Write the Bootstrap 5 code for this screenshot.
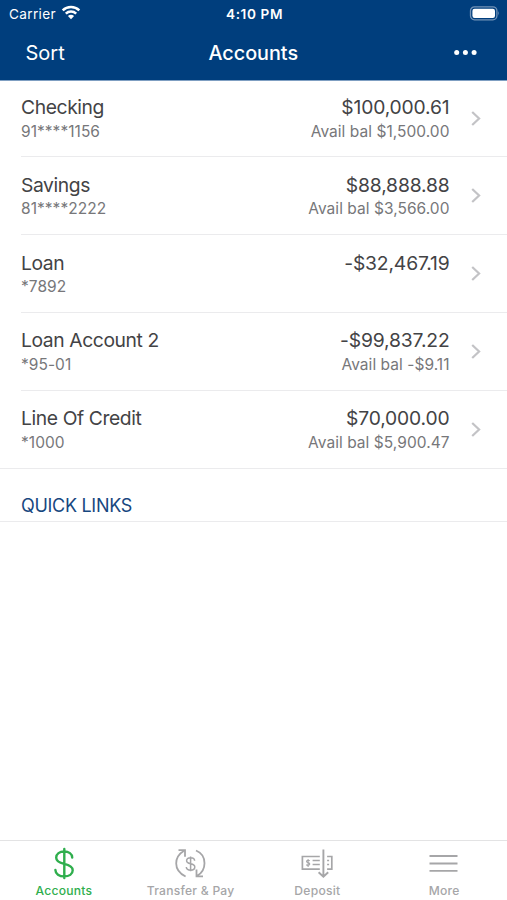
<!DOCTYPE html>
<html lang="en">
<head>
<meta charset="utf-8">
<meta name="viewport" content="width=device-width, initial-scale=1">
<title>Accounts</title>
<link href="https://cdn.jsdelivr.net/npm/bootstrap@5.3.0/dist/css/bootstrap.min.css" rel="stylesheet">
<style>
body{font-family:Inter,"Liberation Sans",sans-serif;color:#434345;height:900px;overflow:hidden}
svg{display:block;flex:none}
.topbar{background:#003e7d;height:81px;border-bottom:1px solid #7f9fc2}
.status{height:27px;font-size:13.6px;line-height:28px;padding:0 7px 0 9px}
.status .side,.titlebar .side{flex:1 1 0}
.status .side:first-child{letter-spacing:.35px}
.wifi{margin:-2px 0 0 5px}
.clock{font-weight:600;letter-spacing:.6px}
.titlebar{height:52px;padding:0 30px 0 25.5px;font-size:20px;line-height:50px}
.page-title{font-weight:500;font-size:19.8px;padding-left:4px}
.account{height:78px;padding:14px 26px 0 0;margin-left:21px;border-bottom:1px solid #ebebed}
.account:first-child{height:76px;padding-top:13px}
.account.last{margin-left:0;padding-left:21px}
.label,.amount{font-size:19.3px;line-height:27px}
.label{letter-spacing:-.4px}
.amount{letter-spacing:-.16px}
.number,.avail{font-size:15.5px;line-height:21px;color:#77777a;letter-spacing:.04px}
.values{margin-right:21.5px}
.account:nth-child(2) .label,.account:nth-child(2) .amount,.account:nth-child(3) .label,.account:nth-child(3) .amount{padding-top:1px;line-height:26px}
.chev{margin-top:15.5px}
.links-title{height:53px;padding:23px 0 0 21px;font-size:18px;line-height:27px;letter-spacing:-.3px;color:#17477f;border-bottom:1px solid #ebebed}
.tabs{height:60px;border-top:1px solid #e3e3e4;font-size:12.1px;font-weight:500;letter-spacing:.25px;color:#a6a6a8}
.tabs a{flex:1 1 0;color:inherit;padding:6px 0 0 1px;line-height:20px}
.tabs a.current{color:#2fae4d}
.tabs svg{height:34px}
</style>
<script src="https://cdn.jsdelivr.net/npm/bootstrap@5.3.0/dist/js/bootstrap.bundle.min.js"></script>
</head>
<body class="bg-white d-flex flex-column">
<header class="topbar text-white">
  <div class="status d-flex align-items-center">
    <div class="side d-flex align-items-center"><span>Carrier</span>
      <svg class="wifi" width="20" height="15" viewBox="0 0 20 15" fill="none" stroke="#fff" stroke-width="2.5"><path d="M1.700 5.400a12 12 0 0 1 16.600 0M4.800 8.600a7.600 7.600 0 0 1 10.400 0"/><path d="M10 14.200 6.900 11.100a4.500 4.500 0 0 1 6.200 0z" fill="#fff" stroke="none"/></svg>
    </div>
    <span class="clock">4:10 PM</span>
    <div class="side d-flex justify-content-end">
      <svg width="31" height="15" viewBox="0 0 31 15"><rect x="1.500" y=".8" width="26.400" height="13" rx="4" fill="none" stroke="#7393b7" stroke-width="1.300"/><rect x="3.400" y="2.700" width="22.600" height="9.200" rx="2.200" fill="#fff"/><path d="M29.200 5.100q1.700 2.200 0 4.500z" fill="#7393b7"/></svg>
    </div>
  </div>
  <nav class="titlebar d-flex align-items-center">
    <div class="side"><span>Sort</span></div>
    <span class="page-title">Accounts</span>
    <div class="side d-flex justify-content-end"><svg width="23" height="6" viewBox="0 0 23 6" fill="#fff"><circle cx="2.700" cy="2.500" r="2.500"/><circle cx="11.400" cy="2.500" r="2.500"/><circle cx="20.100" cy="2.500" r="2.500"/></svg></div>
  </nav>
</header>
<main class="flex-grow-1">
  <section>
    <div class="account d-flex"><div class="flex-grow-1"><div class="label">Checking</div><div class="number">91****1156</div></div><div class="values text-end"><div class="amount">$100,000.61</div><div class="avail">Avail bal $1,500.00</div></div><svg class="chev" width="10" height="17" viewBox="0 0 10 17" fill="none" stroke="#c3c3c6" stroke-width="2.200"><path d="m1.200 2 6.900 6.500-6.900 6.500"/></svg></div>
    <div class="account d-flex"><div class="flex-grow-1"><div class="label">Savings</div><div class="number">81****2222</div></div><div class="values text-end"><div class="amount">$88,888.88</div><div class="avail">Avail bal $3,566.00</div></div><svg class="chev" width="10" height="17" viewBox="0 0 10 17" fill="none" stroke="#c3c3c6" stroke-width="2.200"><path d="m1.200 2 6.900 6.500-6.900 6.500"/></svg></div>
    <div class="account d-flex"><div class="flex-grow-1"><div class="label">Loan</div><div class="number">*7892</div></div><div class="values text-end"><div class="amount">-$32,467.19</div></div><svg class="chev" width="10" height="17" viewBox="0 0 10 17" fill="none" stroke="#c3c3c6" stroke-width="2.200"><path d="m1.200 2 6.900 6.500-6.900 6.500"/></svg></div>
    <div class="account d-flex"><div class="flex-grow-1"><div class="label">Loan Account 2</div><div class="number">*95-01</div></div><div class="values text-end"><div class="amount">-$99,837.22</div><div class="avail">Avail bal -$9.11</div></div><svg class="chev" width="10" height="17" viewBox="0 0 10 17" fill="none" stroke="#c3c3c6" stroke-width="2.200"><path d="m1.200 2 6.900 6.500-6.900 6.500"/></svg></div>
    <div class="account last d-flex"><div class="flex-grow-1"><div class="label">Line Of Credit</div><div class="number">*1000</div></div><div class="values text-end"><div class="amount">$70,000.00</div><div class="avail">Avail bal $5,900.47</div></div><svg class="chev" width="10" height="17" viewBox="0 0 10 17" fill="none" stroke="#c3c3c6" stroke-width="2.200"><path d="m1.200 2 6.900 6.500-6.900 6.500"/></svg></div>
  </section>
  <h2 class="links-title mb-0 fw-normal">QUICK LINKS</h2>
</main>
<footer class="tabs d-flex text-center">
  <a class="current d-flex flex-column align-items-center text-decoration-none" href="#"><svg width="34" viewBox="0 0 34 34" fill="none" stroke="currentColor" stroke-width="2.400" stroke-linecap="round"><path d="M17.300 2v29M25.200 10.500c0-3.600-3.400-6-8-6s-8 2.300-8 6.200 3.400 5.100 8 6.100 8.500 2.400 8.500 6.400-3.600 6.200-8.500 6.200-8.800-2.500-8.800-6.400"/></svg><span>Accounts</span></a>
  <a class="d-flex flex-column align-items-center text-decoration-none" href="#"><svg width="34" viewBox="0 0 34 34" fill="none" stroke="currentColor" stroke-width="1.800"><path d="M11.600 29.500C5.500 26.500 2.200 21.500 2.200 16.500c0-5 2.500-9.500 7.500-12.500M4.500 3.200h6.500v6.500M22 3.500c6 2.500 8.500 7.500 8.500 12.700 0 5-2.400 9.800-7.400 12.600M22.500 22.500v6.800h6.500"/><path d="M16.600 9.500v14.700M20.600 13.800c0-1.900-1.700-3.100-4-3.100s-4 1.200-4 3.100 1.600 2.500 4 3 4.200 1.200 4.200 3.200-1.800 3.200-4.200 3.200-4.300-1.300-4.300-3.300" stroke-width="1.500"/></svg><span>Transfer &amp; Pay</span></a>
  <a class="d-flex flex-column align-items-center text-decoration-none" href="#"><svg width="34" viewBox="0 0 34 34" fill="none" stroke="currentColor" stroke-width="1.700"><path d="M19.800 9.500H2.400v12.700h17.400M27.100 9.500h4.700v12.700h-4.700M12.600 13.500h7.200M12.600 17.500h7.200M27.100 13.500h2M27.100 17.500h2"/><path d="M8.100 12v8M9.700 13.800c-.6-.8-3.200-.8-3.200.7s3.300.8 3.300 2.500-2.900 1.600-3.500.6" stroke-width="1.100"/><path d="M23.400 2.500v27M18.600 25.300l4.800 4.500 4.800-4.500" stroke-width="1.900"/></svg><span>Deposit</span></a>
  <a class="d-flex flex-column align-items-center text-decoration-none" href="#"><svg width="34" viewBox="0 0 34 34" fill="none" stroke="currentColor" stroke-width="1.800"><path d="M2.500 9h28M2.500 16.500h28M2.500 23.800h28"/></svg><span>More</span></a>
</footer>
</body>
</html>
